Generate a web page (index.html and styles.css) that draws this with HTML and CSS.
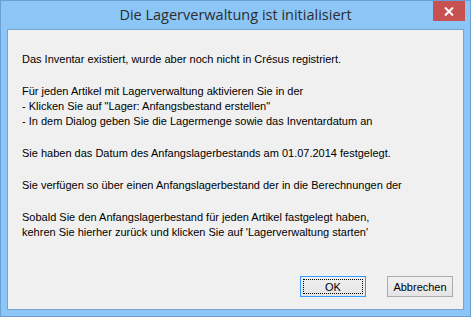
FILE: index.html
```html
<!DOCTYPE html>
<html lang="de">
<head>
    <meta charset="UTF-8">
    <title>Die Lagerverwaltung ist initialisiert</title>
    <link rel="stylesheet" href="styles.css">
</head>
<body>
    <div class="window">
        <div class="titlebar">
            <span class="title">Die Lagerverwaltung ist initialisiert</span>
            <button class="close" type="button" aria-label="Schließen">
                <svg width="10" height="9" viewBox="0 0 10 9">
                    <path d="M1 0.5 L9 8.5 M9 0.5 L1 8.5" stroke="#fff" stroke-width="2"/>
                </svg>
            </button>
        </div>

        <div class="client">
            <div class="message">
                <p>Das Inventar existiert, wurde aber noch nicht in Crésus registriert.</p>
                <p>Für jeden Artikel mit Lagerverwaltung aktivieren Sie in der<br>
                   - Klicken Sie auf "Lager: Anfangsbestand erstellen"<br>
                   - In dem Dialog geben Sie die Lagermenge sowie das Inventardatum an</p>
                <p>Sie haben das Datum des Anfangslagerbestands am 01.07.2014 festgelegt.</p>
                <p>Sie verfügen so über einen Anfangslagerbestand der in die Berechnungen der</p>
                <p>Sobald Sie den Anfangslagerbestand für jeden Artikel fastgelegt haben,<br>
                   kehren Sie hierher zurück und klicken Sie auf 'Lagerverwaltung starten'</p>
            </div>

            <div class="buttons">
                <button type="button" class="btn btn-default"><span>OK</span></button>
                <button type="button" class="btn">Abbrechen</button>
            </div>
        </div>
    </div>
</body>
</html>
```

FILE: styles.css
```css
/* Fenster im Windows-8-Stil */
body {
    margin: 0;
    background-color: #8cc6f7;
}

.window {
    width: 471px;
    height: 317px;
    box-sizing: border-box;
    border: 1px solid #6b9fd3;
    background-color: #8cc6f7;
    padding: 0 6px 6px 6px;
    display: flex;
    flex-direction: column;
}

.titlebar {
    height: 28px;
    position: relative;
    display: flex;
    align-items: center;
    justify-content: center;
}

.title {
    font-family: "Open Sans", sans-serif;
    font-size: 14.5px;
    color: #2d2d2d;
    margin-top: -1px;
}

.close {
    position: absolute;
    top: 0;
    right: -1px;
    width: 32px;
    height: 20px;
    border: none;
    padding: 0;
    background-color: #c75050;
    display: flex;
    align-items: center;
    justify-content: center;
}

.client {
    flex: 1;
    background-color: #f0f0f0;
    border: 1px solid #76a4d2;
    padding: 22px 10px 12px 14px;
    display: flex;
    flex-direction: column;
    font-family: "Liberation Sans", sans-serif;
    font-size: 11px;
    color: #000;
}

.message {
    flex: 1;
}

.message p {
    margin: 0 0 17px 0;
    line-height: 15px;
}

.buttons {
    display: flex;
    justify-content: flex-end;
    gap: 21px;
}

.btn {
    width: 66px;
    height: 21px;
    box-sizing: border-box;
    border: 1px solid #acacac;
    background: linear-gradient(#f0f0f0, #e5e5e5);
    font-family: "Liberation Sans", sans-serif;
    font-size: 11px;
    color: #000;
    padding: 0;
}

.btn-default {
    border-color: #3399ff;
    padding: 2px;
}

.btn-default span {
    display: flex;
    align-items: center;
    justify-content: center;
    height: 100%;
    border: 1px dotted #000;
    box-sizing: border-box;
}
```
